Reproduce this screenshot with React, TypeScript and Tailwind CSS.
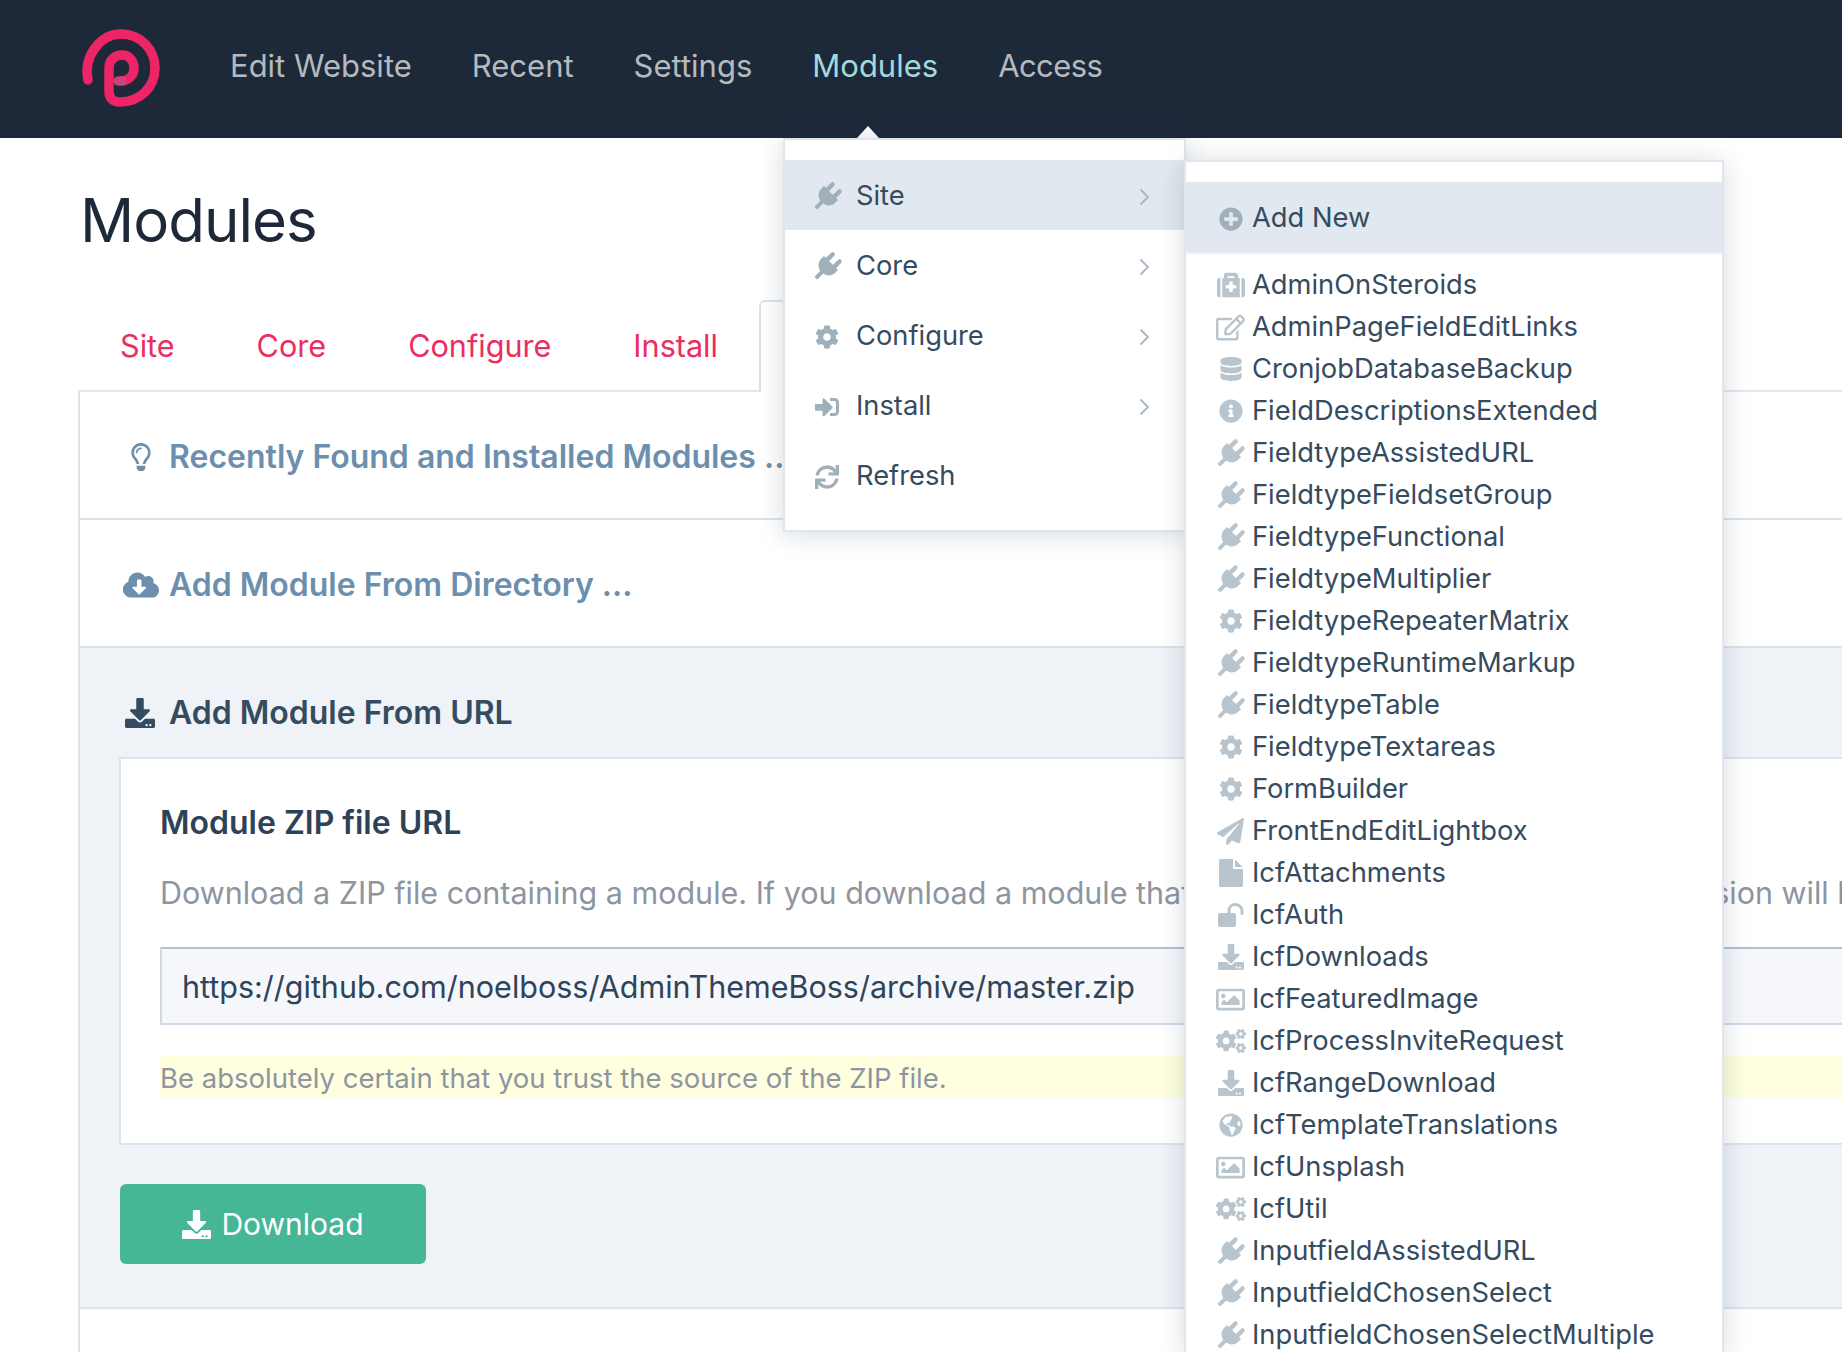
import type { ReactNode } from "react"
import {
  FaCloudDownloadAlt,
  FaCog,
  FaCogs,
  FaDatabase,
  FaDownload,
  FaGlobeAmericas,
  FaInfoCircle,
  FaMedkit,
  FaPaperPlane,
  FaPlusCircle,
  FaRegEdit,
  FaRegImage,
  FaRegLightbulb,
  FaSignInAlt,
  FaSync,
} from "react-icons/fa"

function Logo() {
  return (
    <svg width="100" height="100" viewBox="0 0 100 100" fill="none">
      <path
        d="M18 58C13 35 30 12 51 12C71 12 85 28 85 46C85 65 70 80 50 80C43 80 39 76 39 70L39 46C39 38 45 33 52 33C59 33 64 39 64 46C64 54 58 59 50 59"
        stroke="#ed2566"
        strokeWidth="9.500"
        strokeLinecap="round"
      />
      <path d="M48 59H52" stroke="#c8447f" strokeWidth="9" strokeLinecap="round" />
    </svg>
  )
}

// FontAwesome 4 style plug, the one in react-icons is upright
function Plug() {
  return (
    <svg width="33" height="33" viewBox="0 0 30 30" fill="currentColor">
      <g transform="rotate(45 15 15)">
        <rect x="8.5" y="2" width="4" height="11" rx="2" />
        <rect x="17.5" y="2" width="4" height="11" rx="2" />
        <path d="M6 10.5H24V14C24 19 20 22.5 15 22.5C10 22.5 6 19 6 14Z" />
        <rect x="13.2" y="21" width="3.6" height="9" />
      </g>
    </svg>
  )
}

function FileIcon() {
  return (
    <svg width="24" height="28" viewBox="0 0 24 28" fill="currentColor">
      <path d="M1.5 0H14V9C14 9.600 14.400 10 15 10H24V26.500C24 27.300 23.300 28 22.500 28H1.500C0.700 28 0 27.300 0 26.500V1.500C0 0.700 0.700 0 1.500 0Z" />
      <path d="M16 0.500L23.500 8H16Z" />
    </svg>
  )
}

function UnlockIcon() {
  return (
    <svg width="26" height="24" viewBox="0 0 26 24" fill="none">
      <rect x="0" y="10" width="18" height="14" rx="2" fill="currentColor" />
      <path d="M11 11V7.500C11 4 13.500 1.500 17 1.500C20.500 1.500 24 4 24 7.500V10.500" stroke="currentColor" strokeWidth="3" strokeLinecap="round" />
    </svg>
  )
}

function Chevron() {
  return (
    <svg width="11" height="18" viewBox="0 0 11 18" fill="none" className="ml-auto mr-[34px]">
      <path d="M1.500 1.500L9 9L1.500 16.500" stroke="#a9b7c3" strokeWidth="1.800" />
    </svg>
  )
}

const icons: Record<string, ReactNode> = {
  plug: <Plug />,
  cog: <FaCog size={24} />,
  signin: <FaSignInAlt size={24} />,
  sync: <FaSync size={24} />,
  plus: <FaPlusCircle size={24} />,
  medkit: <FaMedkit size={28} />,
  edit: <FaRegEdit size={29} />,
  db: <FaDatabase size={24} />,
  info: <FaInfoCircle size={24} />,
  plane: <FaPaperPlane size={27} />,
  file: <FileIcon />,
  unlock: <UnlockIcon />,
  download: <FaDownload size={26} />,
  image: <FaRegImage size={29} />,
  cogs: <FaCogs size={30} />,
  globe: <FaGlobeAmericas size={24} />,
}

const sideMenu = [
  { label: "Site", icon: "plug", more: true, active: true },
  { label: "Core", icon: "plug", more: true },
  { label: "Configure", icon: "cog", more: true },
  { label: "Install", icon: "signin", more: true },
  { label: "Refresh", icon: "sync" },
]

const siteModules = [
  ["AdminOnSteroids", "medkit"],
  ["AdminPageFieldEditLinks", "edit"],
  ["CronjobDatabaseBackup", "db"],
  ["FieldDescriptionsExtended", "info"],
  ["FieldtypeAssistedURL", "plug"],
  ["FieldtypeFieldsetGroup", "plug"],
  ["FieldtypeFunctional", "plug"],
  ["FieldtypeMultiplier", "plug"],
  ["FieldtypeRepeaterMatrix", "cog"],
  ["FieldtypeRuntimeMarkup", "plug"],
  ["FieldtypeTable", "plug"],
  ["FieldtypeTextareas", "cog"],
  ["FormBuilder", "cog"],
  ["FrontEndEditLightbox", "plane"],
  ["IcfAttachments", "file"],
  ["IcfAuth", "unlock"],
  ["IcfDownloads", "download"],
  ["IcfFeaturedImage", "image"],
  ["IcfProcessInviteRequest", "cogs"],
  ["IcfRangeDownload", "download"],
  ["IcfTemplateTranslations", "globe"],
  ["IcfUnsplash", "image"],
  ["IcfUtil", "cogs"],
  ["InputfieldAssistedURL", "plug"],
  ["InputfieldChosenSelect", "plug"],
  ["InputfieldChosenSelectMultiple", "plug"],
]

export default function App() {
  return (
    <div className="relative h-[1352px] w-full overflow-hidden bg-white font-['Inter',sans-serif] text-[#354b60]">
      {/* Top bar */}
      <header className="flex h-[138px] items-center bg-[#1d2939] pl-[70px]">
        <span className="mt-[5px]">
          <Logo />
        </span>
        <nav className="mb-[6px] ml-[60px] flex gap-[60px] text-[31px] text-[#b5babf]">
          <span>Edit Website</span>
          <span>Recent</span>
          <span>Settings</span>
          <span className="text-[#a3d9de]">Modules</span>
          <span className="tracking-[-0.6px]">Access</span>
        </nav>
      </header>

      <main>
        <h1 className="pl-[80px] pt-[44px] text-[60px] leading-[76px] tracking-[-1px] text-[#1d2939]">Modules</h1>

        {/* Tabs */}
        <div className="ml-[78px] mt-[42px] flex h-[92px] border-b-2 border-[#e2e8f0] pl-[1px] text-[30.6px] text-[#eb2d60]">
          <span className="flex items-center px-[41px] pt-[2px]">Site</span>
          <span className="flex items-center px-[41px] pt-[2px]">Core</span>
          <span className="flex items-center px-[41px] pt-[2px]">Configure</span>
          <span className="flex items-center px-[41px] pt-[2px]">Install</span>
          <span className="mb-[-2px] h-[92px] w-[300px] rounded-tl-[6px] border-l-2 border-r-2 border-t-2 border-[#dbe4ed] bg-white" />
        </div>

        {/* Panels */}
        <div className="ml-[78px] border-l-2 border-[#dbe4ed]">
          <div className="flex h-[128px] items-center border-b-2 border-[#dbe4ed] pt-[4px] text-[32px] font-semibold text-[#6d8fae]">
            <span className="flex w-[89px] justify-end pr-[14px] text-[#6d8fae]">
              <FaRegLightbulb size={28} />
            </span>
            Recently Found and Installed Modules ...
          </div>
          <div className="flex h-[128px] items-center border-b-2 border-[#dbe4ed] pt-[4px] text-[32px] font-semibold text-[#6d8fae]">
            <span className="flex w-[89px] justify-end pr-[10px]">
              <FaCloudDownloadAlt size={36} />
            </span>
            Add Module From Directory ...
          </div>
          <div className="border-b-2 border-[#dbe4ed] bg-[#eff2f7] pb-[43px]">
            <div className="flex h-[109px] items-center pt-[20px] text-[32px] font-semibold text-[#354b60]">
              <span className="flex w-[89px] justify-end pr-[14px]">
                <FaDownload size={30} />
              </span>
              Add Module From URL
            </div>
            <div className="ml-[39px] mr-[-20px] border-y-2 border-l-2 border-[#dbe4ed] bg-white pb-[45px] pl-[39px]">
              <div className="flex h-[126px] items-center whitespace-nowrap pt-[2px] text-[32px] font-semibold text-[#2e4257]">
                Module ZIP file URL
              </div>
              <p className="h-[62px] whitespace-nowrap text-[30.5px] leading-[16px] text-[#8d95a1]">
                Download a ZIP file containing a module. If you download a module that is already installed, the installed version will be overwritten with the newly downloaded version.
              </p>
              <div className="flex h-[78px] items-center whitespace-nowrap border-2 border-[#cfdae6] border-t-[#b0c1d3] bg-[#f5f7fb] pl-[20px] pt-[2px] text-[30.5px] text-[#2f445a]">
                https://github.com/noelboss/AdminThemeBoss/archive/master.zip
              </div>
              <p className="mt-[31px] h-[42px] whitespace-nowrap bg-[#ffffdf] text-[27.5px] leading-[44px] text-[#8d95a1]">
                Be absolutely certain that you trust the source of the ZIP file.
              </p>
            </div>
            <button className="ml-[40px] mt-[39px] flex h-[80px] w-[306px] items-center justify-center gap-[10px] rounded-[6px] bg-[#45b797] text-[30px] text-white">
              <FaDownload size={29} />
              Download
            </button>
          </div>
          <div className="h-[60px]" />
        </div>
      </main>

      {/* Dropdown */}
      <div className="absolute left-[857px] top-[126px] h-0 w-0 border-x-[11px] border-b-[12px] border-x-transparent border-b-white" />
      <div className="absolute left-[783px] top-[138px] w-[403px] border-2 border-[#dfe6ee] bg-white py-[20px] shadow-[0_2px_24px_rgba(30,50,70,0.18)]">
        {sideMenu.map((item) => (
          <div
            key={item.label}
            className={`flex h-[70px] items-center pt-[3px] text-[27.3px] ${item.active ? "bg-[#e1e8ef]" : ""}`}
          >
            <span className="flex w-[71px] justify-center pl-[13px] text-[#9fb0bb]">{icons[item.icon]}</span>
            {item.label}
            {item.more && <Chevron />}
          </div>
        ))}
      </div>

      {/* Flyout */}
      <div className="absolute left-[1184px] top-[160px] w-[540px] border-x-2 border-t-2 border-[#dfe6ee] bg-white pt-[20px] shadow-[0_2px_24px_rgba(30,50,70,0.18)]">
        <div className="flex h-[72px] items-center border-b-2 border-[#edf1f5] bg-[#e1e8ef] pt-[3px] text-[27.3px]">
          <span className="flex w-[66px] justify-center pl-[23px] text-[#9fb0bb]">{icons.plus}</span>
          Add New
        </div>
        <div className="pt-[10px]">
          {siteModules.map(([label, icon]) => (
            <div key={label} className="flex h-[42px] items-center text-[27.3px]">
              <span className="flex w-[66px] justify-center pl-[23px] text-[#b8c5ce]">{icons[icon]}</span>
              {label}
            </div>
          ))}
        </div>
      </div>
    </div>
  )
}
